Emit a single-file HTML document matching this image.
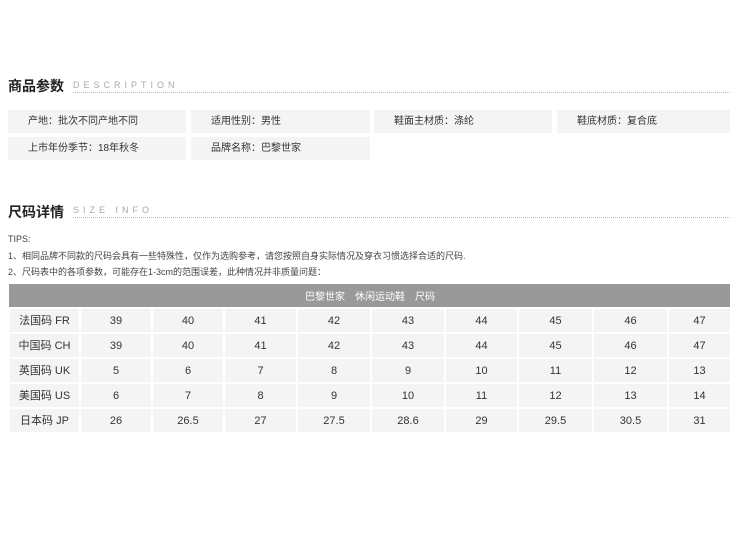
<!DOCTYPE html>
<html><head><meta charset="utf-8"><style>
*{margin:0;padding:0;box-sizing:border-box}
body{width:730px;height:540px;background:#fff;font-family:"Liberation Sans","Noto Sans CJK SC",sans-serif;position:relative;overflow:hidden;color:#333}
.t{position:absolute;font-size:14px;color:#222;font-weight:bold}
.en{position:absolute;font-size:9px;letter-spacing:4px;color:#aaa}
.dot{position:absolute;height:0;border-top:1px dotted #bbb;right:0}
.c{position:absolute;background:#f4f4f4;font-size:10px;color:#333;height:23px;line-height:23px;padding-left:20px}
.tip{position:absolute;left:8px;font-size:9px;color:#444}
table{position:absolute;left:8px;top:284px;border-collapse:collapse;width:722px;table-layout:fixed}
td{background:#f4f4f4;border:2px solid #fff;text-align:center;font-size:11px;height:25px;line-height:20px;padding:0;color:#333}
th{background:#999;color:#fff;font-size:10px;font-weight:normal;height:24px;border-bottom:2px solid #fff}
</style></head><body>
<div class="t" style="left:8px;top:76px">商品参数</div>
<div class="en" style="left:73px;top:80px">DESCRIPTION</div>
<div class="dot" style="left:73px;top:92px"></div>
<div class="c" style="left:8px;top:110px;width:178px">产地：批次不同产地不同</div>
<div class="c" style="left:191px;top:110px;width:179px">适用性别：男性</div>
<div class="c" style="left:374px;top:110px;width:178px">鞋面主材质：涤纶</div>
<div class="c" style="left:557px;top:110px;width:173px">鞋底材质：复合底</div>
<div class="c" style="left:8px;top:137px;width:178px">上市年份季节：18年秋冬</div>
<div class="c" style="left:191px;top:137px;width:179px">品牌名称：巴黎世家</div>
<div class="t" style="left:8px;top:202px">尺码详情</div>
<div class="en" style="left:73px;top:205px">SIZE INFO</div>
<div class="dot" style="left:73px;top:217px"></div>
<div class="tip" style="top:234px">TIPS:</div>
<div class="tip" style="top:249px">1、相同品牌不同款的尺码会具有一些特殊性，仅作为选购参考，请您按照自身实际情况及穿衣习惯选择合适的尺码.</div>
<div class="tip" style="top:265px">2、尺码表中的各项参数，可能存在1-3cm的范围误差，此种情况并非质量问题：</div>
<table>
<colgroup><col style="width:71px"><col style="width:72px"><col style="width:72px"><col style="width:73px"><col style="width:74px"><col style="width:74px"><col style="width:73px"><col style="width:75px"><col style="width:75px"><col style="width:63px"></colgroup>
<tr><th colspan="10">巴黎世家　休闲运动鞋　尺码</th></tr>
<tr><td>法国码 FR</td><td>39</td><td>40</td><td>41</td><td>42</td><td>43</td><td>44</td><td>45</td><td>46</td><td>47</td></tr>
<tr><td>中国码 CH</td><td>39</td><td>40</td><td>41</td><td>42</td><td>43</td><td>44</td><td>45</td><td>46</td><td>47</td></tr>
<tr><td>英国码 UK</td><td>5</td><td>6</td><td>7</td><td>8</td><td>9</td><td>10</td><td>11</td><td>12</td><td>13</td></tr>
<tr><td>美国码 US</td><td>6</td><td>7</td><td>8</td><td>9</td><td>10</td><td>11</td><td>12</td><td>13</td><td>14</td></tr>
<tr><td>日本码 JP</td><td>26</td><td>26.5</td><td>27</td><td>27.5</td><td>28.6</td><td>29</td><td>29.5</td><td>30.5</td><td>31</td></tr>
</table>
</body></html>
